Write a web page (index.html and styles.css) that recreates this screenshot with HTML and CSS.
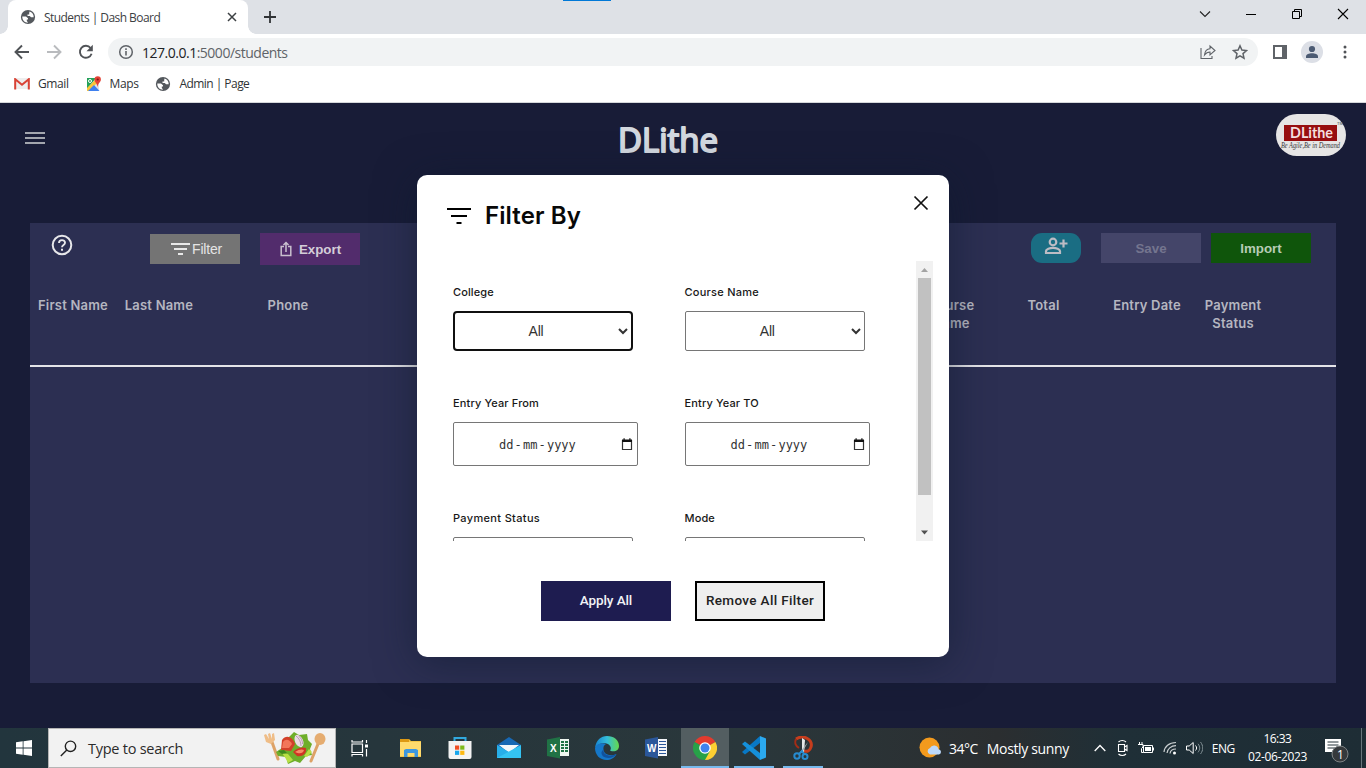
FILE: index.html
```html
<!DOCTYPE html>
<html lang="en">
<head>
<meta charset="utf-8">
<title>Students | Dash Board</title>
<link rel="stylesheet" href="styles.css">
</head>
<body>
<svg width="0" height="0" class="defs">
  <symbol id="globe" viewBox="0 0 16 16"><circle cx="8" cy="8" r="7.100" fill="#54585d"/><path d="M2.300 7.500H6l2 1.700v1.200H6.800v1.400L8 13.700C4.800 13.800 2.100 11 2.300 7.500zM9.500 2.500C12 3.200 13.800 5.500 13.700 8.300H11L9.800 7H7.500V5.500h1.700V4z" fill="#fff"/></symbol>
  <symbol id="cal" viewBox="0 0 12 13"><path d="M1.500 2.500h9v9h-9z" fill="none" stroke="#333" stroke-width="1.200"/><path d="M1 1.500h10V4H1zM2.500.3h1.200v2H2.500zM8.300.3h1.200v2H8.300z" fill="#111"/></symbol>
</svg>

<div class="tabstrip">
  <div class="tab"><svg width="16" height="16"><use href="#globe"/></svg><span class="tab-title">Students | Dash Board</span><svg class="tab-close" width="10" height="10" viewBox="0 0 10 10"><path d="M1 1l8 8M9 1L1 9" stroke="#3c4043" stroke-width="1.500"/></svg></div>
  <svg class="newtab" width="12" height="12" viewBox="0 0 12 12"><path d="M6 0v12M0 6h12" stroke="#303336" stroke-width="1.800"/></svg>
  <div class="progress"></div>
  <div class="winctl">
    <svg width="12" height="12" viewBox="0 0 12 12"><path d="M1 3.500l5 5 5-5" fill="none" stroke="#222" stroke-width="1.100"/></svg>
    <svg width="12" height="12" viewBox="0 0 12 12"><path d="M1 6.500h10" stroke="#000"/></svg>
    <svg width="12" height="12" viewBox="0 0 12 12"><path d="M1.500 3.500h7v7h-7zM3.500 3.500v-2h7v7h-2" fill="none" stroke="#000"/></svg>
    <svg width="12" height="12" viewBox="0 0 12 12"><path d="M1 1l10 10M11 1L1 11" stroke="#000" stroke-width="1.100"/></svg>
  </div>
</div>

<div class="toolbar">
  <svg width="16" height="16" viewBox="0 0 16 16"><path d="M15 8H2M8 1.500L1.500 8 8 14.500" fill="none" stroke="#505357" stroke-width="1.900"/></svg>
  <svg width="16" height="16" viewBox="0 0 16 16"><path d="M1 8h13M8 1.500L14.500 8 8 14.500" fill="none" stroke="#b9bbbe" stroke-width="1.900"/></svg>
  <svg width="16" height="16" viewBox="0 0 16 16"><path d="M13.600 9.800A6 6 0 1 1 12.600 4" fill="none" stroke="#505357" stroke-width="1.900"/><path d="M14.800.800v6.400H8.500z" fill="#505357"/></svg>
  <div class="address">
    <svg width="16" height="16" viewBox="0 0 16 16"><circle cx="8" cy="8" r="6.300" fill="none" stroke="#5f6368" stroke-width="1.500"/><path d="M8 7v4.500M8 4.300v1.600" stroke="#5f6368" stroke-width="1.600"/></svg>
    <span class="url"><b>127.0.0.1</b>:5000/students</span>
    <svg class="share" width="16" height="16" viewBox="0 0 16 16"><path d="M1 4v10.500h11V12M4.500 11C5 7 7 5 10 4.800V2l5 4.500-5 4.300V8C7.500 8 6 9 4.500 11z" fill="none" stroke="#5f6368" stroke-width="1.100"/></svg>
    <svg width="16" height="16" viewBox="0 0 16 16"><path d="M8 1.800l1.900 4.300 4.600.4-3.500 3.100 1 4.600L8 11.800l-4 2.400 1-4.600-3.500-3.100 4.600-.4z" fill="none" stroke="#5f6368" stroke-width="1.500"/></svg>
  </div>
  <div class="tools">
    <svg width="14" height="14" viewBox="0 0 14 14"><path d="M0 0h14v14H0z" fill="#5f6368"/><path d="M2 2h7v10H2z" fill="#fff"/></svg>
    <svg width="22" height="22" viewBox="0 0 22 22"><circle cx="11" cy="11" r="11" fill="#dcdfe6"/><circle cx="11" cy="8" r="3.100" fill="#4c5b73"/><path d="M5 17v-1.500c0-2 3-3.200 6-3.200s6 1.200 6 3.200V17z" fill="#4c5b73"/></svg>
    <svg width="4" height="14" viewBox="0 0 4 14"><path d="M2 2h0M2 7h0M2 12h0" stroke="#505357" stroke-width="3" stroke-linecap="round"/></svg>
  </div>
</div>

<div class="bookmarks">
  <svg width="16" height="12" viewBox="0 0 16 12"><path d="M0 0h16v11H0z" fill="#eee"/><path d="M1.200 11.500V1.200L8 6.800l6.800-5.600v10.300" fill="none" stroke="#d94235" stroke-width="2"/></svg>
  <span class="bm-gmail">Gmail</span>
  <svg width="16" height="16" viewBox="0 0 16 16"><path d="M1 2h12v13H1z" fill="#dfe3e5"/><path d="M1 2h9L1 13z" fill="#25a15a"/><path d="M1 12L10 3l2 3-9 9H1z" fill="#fbc638"/><path d="M2 15l6-6 5.500 6z" fill="#3e80ef"/><circle cx="4" cy="5" r="1.500" fill="none" stroke="#fff"/><path d="M11.500 11C11 7 8.500 6 8.500 3.500a3.200 3.200 0 0 1 6.400 0C14.900 6 12 7 11.500 11z" fill="#e44336"/><circle cx="11.700" cy="3.500" r="1.100" fill="#811b16"/></svg>
  <span class="bm-maps">Maps</span>
  <svg width="16" height="16"><use href="#globe"/></svg>
  <span class="bm-admin">Admin | Page</span>
</div>

<main class="page">
  <header class="site-head">
    <div class="burger"><i></i><i></i><i></i></div>
    <svg class="wordmark" width="120" height="50" viewBox="0 0 120 50"><text x="10" y="36" textLength="100" lengthAdjust="spacingAndGlyphs">DLithe</text></svg>
    <svg class="logo" width="70" height="42" viewBox="0 0 70 42"><rect width="70" height="42" rx="21" fill="#e6e5e5"/><path d="M8 11h53v16H8z" fill="#970e10"/><text class="logo-name" x="14" y="24" textLength="43" lengthAdjust="spacingAndGlyphs">DLithe</text><text class="logo-tag" x="5" y="34" textLength="59" lengthAdjust="spacingAndGlyphs">Be Agile,Be in Demand</text><text class="logo-tm" x="61" y="11">TM</text></svg>
  </header>

  <section class="panel">
    <div class="actions">
      <svg class="help" width="22" height="22" viewBox="0 0 22 22"><circle cx="11" cy="11" r="9.300" fill="none" stroke="#e7e7ea" stroke-width="2"/><path d="M8 9C8 5.200 14 5.200 14 8.800 14 11 11 11 11 13.300" fill="none" stroke="#e7e7ea" stroke-width="1.900"/><path d="M10 14.800h2v2h-2z" fill="#e7e7ea"/></svg>
      <button class="btn filter"><svg width="20" height="14" viewBox="0 0 20 14"><path d="M1 2h19M4 7h13M8 12h5" stroke="#e8e8e8" stroke-width="2"/></svg><span>Filter</span></button>
      <button class="btn export"><svg width="12" height="16" viewBox="0 0 12 16"><path d="M4 5.500H1.200v9h9.600v-9H8M6 11V2M3.500 4L6 1.500 8.500 4" fill="none" stroke="#c9c0ce" stroke-width="1.500"/></svg><span>Export</span></button>
      <button class="btn add"><svg width="24" height="18" viewBox="0 0 24 18"><circle cx="9" cy="5" r="3.300" fill="none" stroke="#bcbcc4" stroke-width="2.200"/><path d="M2 16v-2c0-2 4-3.200 7-3.200s7 1.200 7 3.200v2zM19.500 2.500v8M15.500 6.500h8" fill="none" stroke="#bcbcc4" stroke-width="2.200"/></svg></button>
      <button class="btn save">Save</button>
      <button class="btn import">Import</button>
    </div>
    <div class="thead">
      <span>First Name</span><span>Last Name</span><span>Phone</span><span></span><span>Course<br>Name</span><span>Total</span><span>Entry Date</span><span>Payment<br>Status</span>
    </div>
  </section>

  <div class="modal">
    <div class="modal-head">
      <svg width="24" height="18" viewBox="0 0 24 18"><path d="M0 2h24M4 9h16M9.500 16h5" stroke="#000" stroke-width="2"/></svg>
      <h2>Filter By</h2>
      <svg class="close" width="16" height="16" viewBox="0 0 16 16"><path d="M1.500 1.500l13 13M14.500 1.500l-13 13" stroke="#111" stroke-width="1.700"/></svg>
    </div>
    <div class="scroll">
      <div class="fields">
        <label class="f1">College<select class="focused"><option>All</option></select></label>
        <label class="f2">Course Name<select><option>All</option></select></label>
        <label class="f3">Entry Year From<span class="date"><span class="dmy">dd<i>-</i>mm<i>-</i>yyyy</span><svg width="12" height="13"><use href="#cal"/></svg></span></label>
        <label class="f4">Entry Year TO<span class="date"><span class="dmy">dd<i>-</i>mm<i>-</i>yyyy</span><svg width="12" height="13"><use href="#cal"/></svg></span></label>
        <label class="f5">Payment Status<select></select></label>
        <label class="f6">Mode<select></select></label>
      </div>
      <div class="bar">
        <svg width="17" height="17" viewBox="0 0 17 17"><path d="M5 11l3.500-4 3.500 4z" fill="#a3a3a3"/></svg>
        <div class="thumb"></div>
        <svg width="17" height="17" viewBox="0 0 17 17"><path d="M5 6.500l3.500 4 3.500-4z" fill="#505050"/></svg>
      </div>
    </div>
    <div class="modal-foot"><button class="apply">Apply All</button><button class="remove">Remove All Filter</button></div>
  </div>
</main>

<footer class="taskbar">
  <div class="start"><svg width="16" height="16" viewBox="0 0 16 16"><path d="M0 2.200l6.700-.9v6.200H0zM7.500 1.200L16 0v7.500H7.500zM0 8.400h6.700v6.300L0 13.800zM7.500 8.400H16V16l-8.500-1.200z" fill="#fff"/></svg></div>
  <div class="search">
    <svg width="17" height="17" viewBox="0 0 17 17"><circle cx="10.500" cy="6.300" r="5.200" fill="none" stroke="#222" stroke-width="1.400"/><path d="M6.800 10L.8 16" stroke="#222" stroke-width="1.400"/></svg>
    <span>Type to search</span>
    <svg class="salad" width="62" height="33" viewBox="0 0 62 33"><path d="M8 10l6 17" stroke="#dda267" stroke-width="3" stroke-linecap="round"/><path d="M0 3l2 7 5 2 4-4-1-7-2 1v5L6 1 4 2l1 5-3-5z" fill="#efbd87"/><path d="M54 12l-7 17" stroke="#dda267" stroke-width="3" stroke-linecap="round"/><ellipse cx="56" cy="7" rx="5.500" ry="6" fill="#e5ac70"/><path d="M12 20l6-4 1-7 5-3 6-6 5 3 8-1 1 6 4 4-2 5 2 6-6 1-6 7-5-2-7 3-2-7-8-1z" fill="#6fae2a"/><path d="M18 8c4-6 11-3 13 4l-4 7-10-1z" fill="#d2402a"/><path d="M19 10c3-4 7-2 9 2l-3 4-7 0z" fill="#f2765a"/><path d="M29 20c5-5 10-5 13-4 1 6-4 9-9 8z" fill="#cf3524"/><path d="M31 20c4-3 7-3 9-2-1 4-5 4-9 2z" fill="#f68d66"/><ellipse cx="35" cy="9" rx="4" ry="6.500" fill="#eadce5" transform="rotate(-25 35 9)"/><path d="M32 4c3 2 5 6 5 10M34.500 4c3 2 4 5 4 8" fill="none" stroke="#b086a6" stroke-width=".8"/><path d="M18 21l6 1 5 6-5 3-2-4zM40 24l5-7 3 3-5 5z" fill="#b8df45"/><path d="M14 19l6-1 3 3-5 1z" fill="#3f8a1d"/></svg>
  </div>
  <div class="apps">
    <svg class="views" viewBox="0 0 24 24"><path d="M4 8h10.500v8.500H4zM4 4v2h10.500V4M4 20.500v-2h10.500v2M18.500 4v3M18.500 13v7.500" fill="none" stroke="#fff" stroke-width="1.200"/><path d="M17 8.500h3v3h-3z" fill="#fff"/></svg>
    <svg viewBox="0 0 24 24"><path d="M1 3h9l2 2h10v16H1z" fill="#f6c646"/><path d="M1 3h9v3H1z" fill="#dd9914"/><path d="M1 6h21v14H1z" fill="#ffda6d"/><path d="M5 21v-7l2-1h10l2 1v7h-3.500v-4h-7v4z" fill="#3d97df"/></svg>
    <svg viewBox="0 0 24 24"><path d="M6.500 6V2h11v4" fill="none" stroke="#31a9df" stroke-width="2"/><path d="M.5 5h23v16a2 2 0 0 1-2 2h-19a2 2 0 0 1-2-2z" fill="#f3f3f3"/><path d="M7 9.500h4.200v4.200H7z" fill="#f04e24"/><path d="M12.200 9.500h4.200v4.200h-4.200z" fill="#7fba1a"/><path d="M7 14.700h4.200v4.200H7z" fill="#17a6ed"/><path d="M12.200 14.700h4.200v4.200h-4.200z" fill="#fdb913"/></svg>
    <svg viewBox="0 0 24 24"><path d="M0 9l12-8 12 8v13H0z" fill="#1768b4"/><path d="M2 9h20l-10 8z" fill="#f3f7fa"/><path d="M0 9l12 7 12 6H0z" fill="#27aee9"/><path d="M24 9v13H0z" fill="#34c3f2"/></svg>
    <svg viewBox="0 0 24 24"><path d="M13 3h10v17H13z" fill="#eef6f0"/><path d="M1 3.500L14 1v21.500L1 20z" fill="#207245"/><path d="M15 5h3v2h-3zM19 5h3v2h-3zM15 8h3v2h-3zM19 8h3v2h-3zM15 11h3v2h-3zM19 11h3v2h-3zM15 14h3v2h-3zM19 14h3v2h-3z" fill="#207245"/><text class="office" x="4" y="15.500">X</text></svg>
    <svg viewBox="0 0 24 24"><defs><linearGradient id="eg" x2="1"><stop stop-color="#1784d0"/><stop offset=".5" stop-color="#34bddb"/><stop offset="1" stop-color="#65d94a"/></linearGradient></defs><path d="M0 12C1 4 6 0 12 0c7 0 12 4 12 10 0 5-5 6.500-9 4.500 2-2 .5-6-3.500-7C7 6.500 2 8 0 12z" fill="url(#eg)"/><path d="M0 12C2 7 7 6.500 11 8c-2 1-3 3-2.500 6 .700 4 6 7 13 4-2 4-6 6-10 6C5 24 0 19 0 12z" fill="#1577c8"/><path d="M8.500 13c-1 5 5 9 13 5-4 6-16 5-15-2z" fill="#11529d"/></svg>
    <svg viewBox="0 0 24 24"><path d="M13 3h10v17H13z" fill="#f4f6fa"/><path d="M1 3.500L14 1v21.500L1 20z" fill="#2b579a"/><path d="M15 5.500h7M15 8.500h7M15 11.500h7M15 14.500h7M15 17.500h7" stroke="#2b579a"/><text class="office" x="3" y="15.500">W</text></svg>
  </div>
  <div class="open">
    <div class="app active"><svg viewBox="0 0 24 24"><path d="M12 12L1.600 6A12 12 0 0 1 22.400 6z" fill="#e33b2e"/><path d="M12 12L22.400 6A12 12 0 0 1 12 24z" fill="#fdcf32"/><path d="M12 12l5 3-5 9A12 12 0 0 1 1.600 6z" fill="#27a148"/><circle cx="12" cy="12" r="5.800" fill="#fff"/><circle cx="12" cy="12" r="4.500" fill="#3f82ed"/></svg></div>
    <div class="app"><svg viewBox="0 0 24 24"><path d="M18 0l6 2.500v19L18 24z" fill="#2ba9ef"/><path d="M18 0v7L3 18.500 0 16z" fill="#0878c5"/><path d="M18 24v-7L3 5.500 0 8z" fill="#1590da"/></svg></div>
    <div class="app"><svg viewBox="0 0 24 24"><path d="M5 3c8-5 17 1 15 8-1 4-4 5-7 4" fill="none" stroke="#c63d1d" stroke-width="3"/><path d="M5 3c-2 4 0 7 3 9" fill="none" stroke="#a52c15" stroke-width="2"/><path d="M11 2l3 2-1 13h-2z" fill="#e5e8e9"/><path d="M17 6l-6 11-2-1z" fill="#a9b0b4"/><circle cx="6" cy="20" r="2.700" fill="none" stroke="#278bd0" stroke-width="2"/><circle cx="14" cy="20.500" r="2.500" fill="none" stroke="#278bd0" stroke-width="2"/><path d="M8 18l3-3 2 3" fill="none" stroke="#278bd0" stroke-width="2"/></svg></div>
  </div>
  <div class="weather">
    <svg width="23" height="22" viewBox="0 0 23 22"><circle cx="10.500" cy="10.500" r="10" fill="#f39a1d"/><path d="M11 17.500a3.400 3.400 0 0 1 0-6.500 4.500 4.500 0 0 1 8.500 1.200A2.700 2.700 0 0 1 20 17.500z" fill="#bcd8fa"/></svg>
    <span class="temp">34°C</span><span class="sky">Mostly sunny</span>
  </div>
  <div class="tray">
    <svg width="12" height="8" viewBox="0 0 12 8"><path d="M.7 7L6 1.500 11.300 7" fill="none" stroke="#fff" stroke-width="1.300"/></svg>
    <svg width="14" height="18" viewBox="0 0 14 18"><path d="M3.500 5.500h6v7h-6zM9.500 8L12 6.500v5L9.500 10M3.500 3c2-2 5.500-2 7.500 0M3.500 15c2 2 5.500 2 7.500 0" fill="none" stroke="#fff" stroke-width="1.100"/></svg>
    <svg width="16" height="12" viewBox="0 0 16 12"><path d="M5.500 3.500h9v7h-9zM0 2.500h5v2.500L3.500 6.500v4h2M1.500 0v2.500M4 0v2.500" fill="none" stroke="#fff"/><path d="M7 5h6v4H7zM14.500 5.500H16v3h-1.500z" fill="#fff"/></svg>
    <svg width="14" height="14" viewBox="0 0 14 14"><path d="M1 11C1.500 5.500 6 1.500 13 1.500M4 12C4.300 8 8 4.700 13 4.700M7 12.500C7.300 10 9.500 8 13 8" fill="none" stroke="#cbd0d2" stroke-width="1.200"/><circle cx="11.500" cy="12" r="1.500" fill="#fff"/></svg>
    <svg width="17" height="14" viewBox="0 0 17 14"><path d="M.5 5h2.700l4-3.500v11L3.200 9H.5zM9.500 4.500c1.500 1.700 1.500 3.300 0 5" fill="none" stroke="#fff"/><path d="M12 2.800c2.300 3 2.300 5.600 0 8.500M14.500 1c3 4 3 8 0 12" fill="none" stroke="#829095"/></svg>
    <span class="lang">ENG</span>
    <div class="clock"><span>16:33</span><span class="day">02-06-2023</span></div>
    <svg class="notice" width="26" height="26" viewBox="0 0 26 26"><path d="M1 2h16v13h-5l-4 4v-4H1z" fill="#fff"/><path d="M3.500 5h11M3.500 8h11M3.500 11h8" stroke="#26343b"/><circle cx="16" cy="17" r="8" fill="#35393c" stroke="#7d8284"/><text x="13" y="21.500">1</text></svg>
  </div>
  <div class="desktop-edge"></div>
</footer>
</body>
</html>
```
FILE: styles.css
```css
* { box-sizing: border-box; }
body { margin: 0; width: 1366px; height: 768px; overflow: hidden; display: flex; flex-direction: column; font-family: "Open Sans", sans-serif; background: #fff; }
svg { display: block; flex: none; }
.defs { position: absolute; }
button, select { font-family: "Liberation Sans", sans-serif; margin: 0; }
span { white-space: nowrap; }

.tabstrip { height: 34px; background: #dee1e6; display: flex; flex: none; position: relative; padding-left: 8px; }
.tab { width: 240px; background: #fff; border-radius: 8px 8px 0 0; display: flex; align-items: center; padding: 0 11px 0 12px; position: relative; }
.tab::before, .tab::after { content: ""; position: absolute; bottom: 0; width: 8px; height: 8px; }
.tab::before { left: -8px; background: radial-gradient(circle at 0 0, transparent 7.500px, #fff 8px); }
.tab::after { right: -8px; background: radial-gradient(circle at 100% 0, transparent 7.500px, #fff 8px); }
.tab-title { font-size: 12px; letter-spacing: -.56px; color: #3c4043; margin-left: 8px; }
.tab-close { margin-left: auto; }
.newtab { margin: 11px 0 0 16px; }
.progress { position: absolute; left: 563px; top: 0; width: 48px; height: 1px; background: #0078d7; }
.winctl { margin: 8px 17px 0 auto; display: flex; gap: 34px; }

.toolbar { height: 36px; flex: none; display: flex; align-items: center; padding-left: 14px; gap: 16px; }
.address { width: 1150px; height: 28px; border-radius: 14px; background: #f1f3f4; margin-left: -2px; display: flex; align-items: center; padding: 0 10px; }
.url { font-size: 14px; margin: 0 0 0 8px; color: #5f6368; letter-spacing: -.49px; }
.url b { font-weight: 400; color: #202124; }
.share { margin: 0 16px 0 auto; }
.tools { display: flex; align-items: center; gap: 14px; margin-left: -1px; }
.tools svg:last-child { margin-left: 6px; }

.bookmarks { height: 33px; flex: none; border-bottom: 1px solid #d5d7da; display: flex; align-items: center; padding: 0 0 5px 14px; font-size: 12px; color: #303336; letter-spacing: -.4px; }
.bm-gmail { margin: 0 17px 0 8px; }
.bm-maps { margin: 0 17px 0 8px; }
.bm-admin { margin-left: 8px; letter-spacing: -.55px; }

.page { height: 625px; flex: none; position: relative; background: #181c37; padding: 0 30px; overflow: hidden; }
.site-head { height: 120px; display: flex; align-items: flex-start; margin: 0 -10px 0 -5px; }
.burger { width: 20px; display: flex; flex-direction: column; gap: 3px; padding-top: 29px; }
.burger i { height: 2px; background: #a3a6ae; }
.wordmark { margin: 13px 0 0 563px; }
.wordmark text { font: 500 32px "Open Sans", sans-serif; fill: #d3d8df; stroke: #d3d8df; stroke-width: 1.900; stroke-linejoin: round; }
.logo { margin: 11px 0 0 auto; overflow: visible; }
.logo-name { font: 700 16px Lato, sans-serif; fill: #f3dfdf; }
.logo-tag { font: italic 7.500px "Liberation Serif", serif; fill: #39393b; }
.logo-tm { font: 4px "Liberation Sans", sans-serif; fill: #444; }

.panel { height: 460px; background: #2c2f52; }
.actions { height: 62px; display: flex; align-items: flex-start; padding: 10px 25px 0 21px; }
.help { margin-top: 1px; }
.btn { border: 0; padding: 0; width: 100px; height: 30px; font-size: 13.330px; font-weight: 700; display: flex; align-items: center; justify-content: center; }
.filter { width: 90px; margin: 1px 20px 0 77px; background: #747474; color: #e4e4e4; font-weight: 400; font-size: 14px; letter-spacing: -.2px; gap: 2px; padding-left: 2px; }
.export { height: 32px; background: #522c6c; color: #d4cdd8; gap: 7px; padding-left: 1px; }
.add { width: 50px; border-radius: 11px; background: #1a6d83; margin-left: auto; padding-bottom: 4px; }
.save { background: #444569; color: #74758f; margin: 0 10px 0 20px; }
.import { background: #0f550b; color: #b7ccb6; }
.thead { height: 82px; border-bottom: 2px solid #e4e4e8; display: grid; grid-template-columns: 86px 86px 172px 536px 82px 103px 104px 68px; padding-top: 10.500px; text-align: center; font: 600 13px/18px Inter, sans-serif; color: #b5b6c0; letter-spacing: .2px; }

.modal { position: absolute; left: 417px; top: 72px; width: 532px; height: 482px; border-radius: 10px; background: #fff; box-shadow: 0 5px 40px rgba(12, 25, 45, .55); }
.modal-head { height: 86px; display: flex; align-items: flex-start; padding: 20px 20px 0 30px; }
.modal-head > svg:first-child { margin-top: 12px; }
.modal-head h2 { margin: 2px 0 0 14px; font: 600 24px/37px Inter, sans-serif; color: #080808; letter-spacing: .1px; }
.close { margin-left: auto; }
.scroll { height: 280px; margin-right: 16px; display: flex; overflow: hidden; }
.fields { flex: 1; display: grid; grid-template-columns: 231.500px 1fr; grid-template-rows: 111px 115px 120px; padding: 23px 0 0 36px; }
.fields label { display: flex; flex-direction: column; gap: 11px; font: 500 11px/16px Inter, sans-serif; color: #181818; letter-spacing: .13px; }
.fields .f2 { letter-spacing: .25px; }
.fields .f5 { letter-spacing: .34px; }
.fields select { width: 180px; height: 40px; font-size: 14px; text-align: center; text-align-last: center; background: #fff; border: 1px solid #767676; border-radius: 2px; color: #333; outline: 0; flex: none; padding-right: 2px; letter-spacing: -.2px; }
.fields .f2 select, .fields .f6 select { width: 180.500px; padding-right: 3px; }
.fields .focused { border: 2px solid #101010; border-radius: 4px; }
.date { width: 185px; height: 44px; border: 1px solid #767676; border-radius: 2px; display: flex; align-items: center; padding: 0 4px 0 45px; justify-content: space-between; letter-spacing: 0; }
.dmy { font: 12px "DejaVu Sans Mono", monospace; color: #333; display: flex; padding-top: 2px; }
.dmy i { font-style: normal; width: 9.500px; text-align: center; }
.bar { width: 17px; background: #f1f1f1; display: flex; flex-direction: column; }
.thumb { height: 217px; margin: 0 2px auto; background: #c1c1c1; }
.modal-foot { display: flex; gap: 24px; padding: 40px 0 0 124px; }
.modal-foot button { width: 130px; height: 40px; padding: 0 0 2px; font: 500 13.500px Roboto, sans-serif; border: 0; }
.modal-foot .apply { background: #1e1c50; color: #f2f2f6; letter-spacing: -.1px; }
.modal-foot .remove { background: #efefef; border: 2px solid #000; color: #222; letter-spacing: .35px; }

.taskbar { height: 40px; flex: none; display: flex; background: linear-gradient(90deg, #22353d 0, #2a373b 55%, #2b2e30 73%, #1f2f37 82%, #1e2d35); color: #fff; }
.start { width: 48px; padding: 12px 16px; }
.search { width: 288px; background: #f2f2f2; border: 1px solid #b5b5b5; display: flex; align-items: center; padding: 0 9px 0 11px; color: #2b2b2b; font-size: 14.500px; letter-spacing: -.25px; }
.search span { margin-left: 11px; }
.salad { margin-left: auto; }
.apps { flex: none; width: 345px; display: flex; gap: 25px; padding: 8px 0 0 14px; }
.apps svg, .app svg { width: 24px; height: 24px; }
.apps .views { margin: 0 2px 0 -2px; }
.office { font: 700 10px "Liberation Sans", sans-serif; fill: #fff; }
.open { display: flex; align-items: flex-end; gap: 9px; }
.app { width: 40px; height: 40px; padding: 8px 8px 0; border-bottom: 2px solid #76b9ed; }
.app.active { width: 48px; padding-left: 12px; background: #535e61; margin-right: -4px; }
.weather { display: flex; align-items: center; margin-left: 96px; font-size: 14px; }
.temp { margin-left: 7px; letter-spacing: -.5px; }
.sky { margin-left: 9px; letter-spacing: -.35px; }
.tray { margin-left: auto; display: flex; align-items: center; gap: 9px; padding-right: 11px; font-size: 12px; }
.tray > svg:first-child { margin-left: -2px; }
.lang { letter-spacing: -.4px; }
.clock { display: flex; flex-direction: column; align-items: center; line-height: 18px; letter-spacing: -.5px; margin-left: 4px; }
.day { letter-spacing: -.35px; }
.notice { margin: 4px 0 0 8px; }
.notice text { font: 12px "Open Sans", sans-serif; fill: #fff; }
.desktop-edge { width: 5px; border-left: 1px solid #68767c; }
```
